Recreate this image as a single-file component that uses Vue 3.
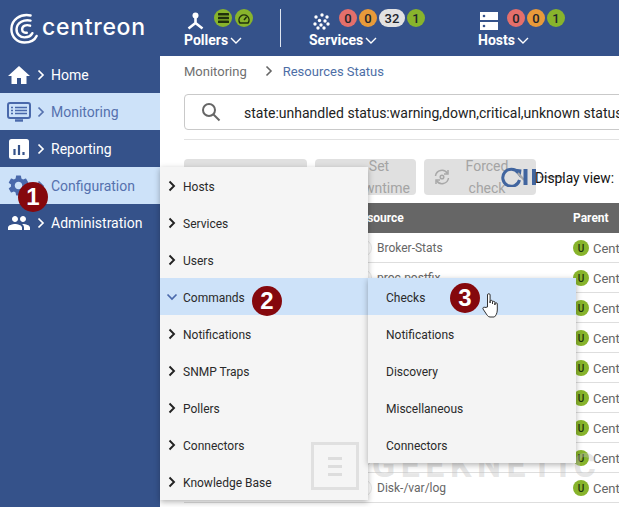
<script setup>
const navItems = [
  { label: 'Home', icon: 'home' },
  { label: 'Monitoring', icon: 'monitor', active: true },
  { label: 'Reporting', icon: 'report' },
  { label: 'Configuration', icon: 'gear', active: true, open: true },
  { label: 'Administration', icon: 'users' }
]
const menuOne = ['Hosts', 'Services', 'Users', 'Commands', 'Notifications', 'SNMP Traps', 'Pollers', 'Connectors', 'Knowledge Base']
const menuTwo = ['Checks', 'Notifications', 'Discovery', 'Miscellaneous', 'Connectors']
const rows = ['Broker-Stats', 'proc-postfix', 'Ping', 'Memory', 'Load', 'Cpu', 'Swap', 'Disk-/', 'Disk-/var/log']
const serviceDots = [[3, 4], [9, 2], [14, 4], [6.500, 7.500], [12, 8], [2, 11], [8, 12], [15, 11], [5, 15], [11, 15]]
</script>

<template>
  <div class="screen">
    <header class="topbar">
      <div class="brand">
        <svg class="brand-mark" viewBox="0 0 30 32" fill="none" stroke="#fff" stroke-width="2.600" stroke-linecap="round">
          <path d="M22 2C11 0 1.500 6.500 1.500 16.500 1.500 25.500 8 31 15.500 31c6 0 11-2.500 13-7" />
          <path d="M22 7.500C15 6 7.500 9.500 7 16.500 6.700 22 11 25.500 15.500 25.500c3.500 0 7-1.500 8.500-4.500" />
          <path d="M21.500 13c-4-1.500-8.500 0-8.500 4 0 3 3 4 5 3.500" />
        </svg>
        <span class="brand-name">centreon</span>
      </div>

      <div class="stat pollers">
        <div class="stat-top">
          <svg class="stat-icon" width="19" height="19" viewBox="0 0 19 19" fill="#fff">
            <circle cx="9.500" cy="3.500" r="3" />
            <path d="M9.500 5v6M9.500 11l-7 5.500M9.500 11l7 5.500" stroke="#fff" stroke-width="2.600" fill="none" />
          </svg>
          <div class="badges">
            <span class="badge green">
              <svg width="11" height="10" viewBox="0 0 11 10" fill="#20300c">
                <rect y="0" width="11" height="2.600" rx=".6" /><rect y="3.700" width="11" height="2.600" rx=".6" /><rect y="7.400" width="11" height="2.600" rx=".6" />
              </svg>
            </span>
            <span class="badge green">
              <svg width="12" height="11" viewBox="0 0 12 11" fill="none" stroke="#20300c" stroke-width="1.500">
                <path d="M2 10a5 5 0 1 1 8 0z" /><path d="M6 7l2.500-3" />
              </svg>
            </span>
          </div>
        </div>
        <div class="stat-label">Pollers<svg class="caret" width="12" height="7" viewBox="0 0 12 7" fill="none" stroke="#fff" stroke-width="1.400"><path d="M1 1l5 5 5-5" /></svg></div>
      </div>

      <div class="divider"></div>

      <div class="stat services">
        <div class="stat-top">
          <svg class="stat-icon" width="17" height="17" viewBox="0 0 17 17" fill="#fff">
            <circle v-for="(d, i) in serviceDots" :key="i" :cx="d[0]" :cy="d[1]" r="1.700" />
          </svg>
          <div class="badges">
            <span class="badge red">0</span>
            <span class="badge orange">0</span>
            <span class="badge grey wide">32</span>
            <span class="badge green">1</span>
          </div>
        </div>
        <div class="stat-label">Services<svg class="caret" width="12" height="7" viewBox="0 0 12 7" fill="none" stroke="#fff" stroke-width="1.400"><path d="M1 1l5 5 5-5" /></svg></div>
      </div>

      <div class="stat hosts">
        <div class="stat-top">
          <svg class="stat-icon" width="18" height="18" viewBox="0 0 18 18">
            <rect width="18" height="8" fill="#fff" /><rect y="10" width="18" height="8" fill="#fff" />
            <circle cx="4" cy="4" r="1.300" fill="#35528a" /><circle cx="4" cy="14" r="1.300" fill="#35528a" />
          </svg>
          <div class="badges">
            <span class="badge red">0</span>
            <span class="badge orange">0</span>
            <span class="badge green">1</span>
          </div>
        </div>
        <div class="stat-label">Hosts<svg class="caret" width="12" height="7" viewBox="0 0 12 7" fill="none" stroke="#fff" stroke-width="1.400"><path d="M1 1l5 5 5-5" /></svg></div>
      </div>
    </header>

    <div class="body">
      <nav class="sidebar">
        <div v-for="item in navItems" :key="item.label" class="nav-item" :class="{ active: item.active }">
          <span class="nav-icon">
            <svg v-if="item.icon === 'home'" width="24" height="24" viewBox="0 0 24 24" fill="#fff"><path d="M10 21v-6h4v6h5.500v-8H23L12 3 1 13h3.500v8z" /></svg>
            <svg v-else-if="item.icon === 'monitor'" width="24" height="20" viewBox="0 0 24 20" fill="none" stroke="#4a69ab" stroke-width="2">
              <rect x="1" y="1" width="22" height="15" rx="2" />
              <path d="M8 18.500h8" stroke-width="2.400" />
              <path d="M4 5.500h2M8 5.500h12M4 8.500h2M8 8.500h12M4 11.500h2M8 11.500h12" stroke-width="1.500" />
            </svg>
            <svg v-else-if="item.icon === 'report'" width="20" height="20" viewBox="0 0 20 20">
              <rect width="20" height="20" rx="2.500" fill="#fff" />
              <path d="M5.500 10v6M10 6v10M14.500 13v3" stroke="#35528a" stroke-width="2.200" />
            </svg>
            <svg v-else-if="item.icon === 'gear'" width="25" height="25" viewBox="0 0 24 24" fill="#4a69ab"><path d="M19.140 12.940c.04-.3.06-.61.06-.94 0-.32-.02-.64-.07-.94l2.030-1.580a.49.49 0 0 0 .12-.61l-1.920-3.320a.488.488 0 0 0-.59-.22l-2.390.96c-.5-.38-1.030-.7-1.620-.94l-.36-2.540a.484.484 0 0 0-.48-.41h-3.840c-.24 0-.43.17-.47.41l-.36 2.540c-.59.24-1.130.57-1.620.94l-2.390-.96c-.22-.08-.47 0-.59.22L2.740 8.870c-.12.21-.08.47.12.61l2.030 1.580c-.05.3-.09.63-.09.94s.02.64.07.94l-2.030 1.580a.49.49 0 0 0-.12.61l1.920 3.320c.12.22.37.29.59.22l2.390-.96c.5.38 1.030.7 1.620.94l.36 2.540c.05.24.24.41.48.41h3.840c.24 0 .44-.17.47-.41l.36-2.540c.59-.24 1.130-.56 1.620-.94l2.390.96c.22.08.47 0 .59-.22l1.920-3.320c.12-.22.07-.47-.12-.61l-2.010-1.580zM12 15.600c-1.980 0-3.600-1.620-3.600-3.600s1.620-3.600 3.600-3.600 3.600 1.620 3.600 3.600-1.620 3.600-3.600 3.600z" /></svg>
            <svg v-else width="24" height="24" viewBox="0 0 24 24" fill="#fff"><path d="M16 11c1.660 0 2.990-1.340 2.990-3S17.660 5 16 5c-1.660 0-3 1.340-3 3s1.340 3 3 3zm-8 0c1.660 0 2.990-1.340 2.990-3S9.660 5 8 5C6.340 5 5 6.340 5 8s1.340 3 3 3zm0 2c-2.330 0-7 1.170-7 3.500V19h14v-2.500c0-2.330-4.670-3.500-7-3.500zm8 0c-.29 0-.62.02-.97.05 1.160.84 1.970 1.970 1.970 3.450V19h6v-2.500c0-2.330-4.670-3.500-7-3.500z" /></svg>
          </span>
          <svg class="nav-chev" width="8" height="12" viewBox="0 0 8 12" fill="none" stroke="currentColor" stroke-width="1.700"><path d="M1.500 1.500L6 6l-4.500 4.500" /></svg>
          <span class="nav-label">{{ item.label }}</span>
        </div>
      </nav>

      <main class="content">
        <div class="crumbs">
          <span class="crumb">Monitoring</span>
          <svg class="crumb-sep" width="8" height="12" viewBox="0 0 8 12" fill="none" stroke="#666" stroke-width="1.600"><path d="M1.500 1.500L6 6l-4.500 4.500" /></svg>
          <span class="crumb current">Resources Status</span>
        </div>

        <div class="search">
          <svg class="search-icon" width="20" height="20" viewBox="0 0 20 20" fill="none" stroke="#666" stroke-width="2"><circle cx="8" cy="8" r="6" /><path d="M12.500 12.500l6 6" /></svg>
          <span class="search-text">state:unhandled status:warning,down,critical,unknown status_types:hard</span>
        </div>
        <div class="rule"></div>

        <div class="toolbar">
          <div class="tool tool-a"></div>
          <div class="tool tool-b"><span>Set</span><span>downtime</span></div>
          <div class="tool tool-c">
            <svg width="18" height="18" viewBox="0 0 18 18" fill="none" stroke="#a8a8a8" stroke-width="1.500">
              <path d="M2.500 8a6.500 6.500 0 0 1 12-2.500M15.500 10a6.500 6.500 0 0 1-12 2.500" />
              <path d="M15 2v4h-4M3 16v-4h4" />
              <circle cx="9" cy="9" r="1.800" />
            </svg>
            <span class="tool-words"><span>Forced</span><span>check</span></span>
          </div>
          <svg class="refresh" width="36" height="20" viewBox="0 0 36 20" fill="none">
            <path d="M17 5.500A8.500 8.500 0 1 0 18.500 13" stroke="#41659f" stroke-width="3" />
            <path d="M12 1.500l8.500 1-1 8.500z" fill="#41659f" />
            <path d="M17 6l6 7" stroke="#a8a8a8" stroke-width="2" />
            <rect x="22.500" y="2" width="4" height="16" fill="#41659f" />
            <rect x="31" y="2" width="4" height="16" fill="#41659f" />
          </svg>
          <svg class="ghost" width="24" height="6" viewBox="0 0 24 6"><path d="M0 3h24" stroke="#a8a8a8" stroke-width="1.500" /></svg>
          <span class="display">Display view:</span>
        </div>

        <div class="table">
          <div class="thead">
            <span class="th-status"></span>
            <span class="th-resource">Resource</span>
            <span class="th-parent">Parent</span>
          </div>
          <div v-for="row in rows" :key="row" class="trow">
            <span class="td-status"></span>
            <span class="td-resource"><i class="ring"></i>{{ row }}</span>
            <span class="td-parent"><b class="u">U</b>Centreon</span>
          </div>
        </div>
      </main>
    </div>

    <div class="mark-text">GEEKNETIC</div>

    <ul class="menu menu-one">
      <li v-for="m in menuOne" :key="m" class="menu-item" :class="{ hot: m === 'Commands' }">
        <svg v-if="m === 'Commands'" class="menu-chev" width="12" height="8" viewBox="0 0 12 8" fill="none" stroke="#4a69ab" stroke-width="1.700"><path d="M1.500 1.500L6 6l4.500-4.500" /></svg>
        <svg v-else class="menu-chev" width="12" height="12" viewBox="0 0 12 12" fill="none" stroke="#222" stroke-width="1.900"><path d="M3.500 1.500L8 6l-4.500 4.500" /></svg>
        <span>{{ m }}</span>
      </li>
    </ul>
    <ul class="menu menu-two">
      <li v-for="m in menuTwo" :key="m" class="menu-item" :class="{ hot: m === 'Checks' }"><span>{{ m }}</span></li>
    </ul>

    <div class="mark-box"><i></i><i></i><i></i></div>

    <span class="step step-1">1</span>
    <span class="step step-2">2</span>
    <span class="step step-3">3</span>

    <svg class="hand" width="18" height="26" viewBox="0 0 18 26" fill="#fff" stroke="#333" stroke-width="1">
      <path d="M5.500 15V3a1.300 1.300 0 0 1 2.600 0v8V9.500a1.200 1.200 0 0 1 2.400 0V12v-1.500a1.200 1.200 0 0 1 2.400 0V13v-1a1.200 1.200 0 0 1 2.400 0v6c0 3-1.500 6-3 7H8c-2 0-3-2-5-5l-2-3c-.7-1.200 1-2.500 2-1.500z" />
    </svg>
  </div>
</template>

<style>
html, body { margin: 0; overflow: hidden; background: #fff; }
</style>

<style scoped>
.screen {
  position: relative;
  width: 619px;
  height: 507px;
  overflow: hidden;
  background: #fff;
  font-family: Roboto, "Liberation Sans", sans-serif;
}
.topbar {
  display: flex;
  height: 56px;
  background: #35528a;
  color: #fff;
}
.brand {
  width: 184px;
  display: flex;
  align-items: center;
  padding-left: 10px;
  box-sizing: border-box;
  gap: 4px;
}
.brand-mark { width: 28px; height: 31px; flex: none; }
.brand-name {
  font-family: Inter, Lato, sans-serif;
  font-size: 23px;
  letter-spacing: .7px;
  margin-top: -3px;
  font-weight: 500;
}
.stat { display: flex; flex-direction: column; padding-top: 9px; }
.stat-top { display: flex; height: 23px; }
.badges { display: flex; gap: 2px; }
.stat-label {
  font-size: 14px;
  font-weight: 700;
  line-height: 16px;
  display: flex;
  align-items: center;
  gap: 2px;
}
.caret { margin-top: 1px; }
.pollers { width: 96px; }
.pollers .stat-icon { margin: 3px 0 0 2px; }
.pollers .badges { margin-left: 9px; gap: 3px; }
.divider { width: 1px; height: 38px; margin-top: 9px; background: #dfe5f0; }
.services { margin-left: 28px; width: 169px; }
.services .stat-icon { margin: 4px 0 0 4px; }
.services .badges { margin-left: 9px; }
.hosts .stat-icon { margin: 3px 0 0 2px; }
.hosts .badges { margin-left: 9px; }
.badge {
  width: 18px;
  height: 18px;
  border-radius: 9px;
  display: flex;
  align-items: center;
  justify-content: center;
  font-size: 13px;
  font-weight: 500;
  color: #20242c;
}
.badge.wide { width: 26px; }
.red { background: #e46f6b; }
.orange { background: #e89a3a; }
.grey { background: #e2e2e2; }
.green { background: #88b42c; }

.body { display: flex; height: 451px; }
.sidebar { width: 160px; flex: none; background: #35528a; }
.nav-item {
  display: flex;
  align-items: center;
  height: 37px;
  color: #fff;
  font-size: 14px;
}
.nav-item.active { background: #cde2f9; color: #5571ae; }
.nav-icon { width: 37px; display: flex; justify-content: center; align-items: center; flex: none; }
.nav-chev { margin: 0 6px 0 0; flex: none; }
.nav-label { white-space: nowrap; padding-top: 1px; }

.content { flex: 1; min-width: 0; padding-left: 24px; overflow: hidden; }
.crumbs {
  display: flex;
  align-items: center;
  height: 30px;
  font-size: 13px;
  white-space: nowrap;
}
.crumb { color: #6f6f6f; }
.crumb.current { color: #4d6ea6; }
.crumb-sep { margin: 0 10px 0 18px; }
.search {
  display: flex;
  align-items: center;
  width: 500px;
  height: 36px;
  margin-top: 8px;
  border: 1px solid #c9c9c9;
  border-radius: 4px;
  box-sizing: border-box;
  white-space: nowrap;
}
.search-icon { margin-left: 16px; flex: none; }
.search-text { margin-left: 23px; padding-top: 2px; font-size: 14px; color: #222; }
.rule { height: 1px; background: #e2e2e2; margin-top: 9px; width: 500px; }
.toolbar {
  display: flex;
  align-items: center;
  width: 500px;
  height: 36px;
  margin-top: 19px;
  gap: 8px;
}
.tool {
  height: 36px;
  background: #e0e0e0;
  border-radius: 4px;
  flex: none;
  color: #a4a4a4;
  font-size: 14px;
  line-height: 22px;
  box-sizing: border-box;
}
.tool-a { width: 123px; }
.tool-b {
  width: 101px;
  display: flex;
  flex-direction: column;
  align-items: center;
  justify-content: center;
  padding-left: 27px;
}
.tool-c {
  width: 112px;
  display: flex;
  align-items: center;
  padding-left: 9px;
}
.tool-words {
  display: flex;
  flex-direction: column;
  align-items: center;
  width: 56px;
  margin-left: 8px;
}
.refresh { margin-left: -43px; flex: none; }
.ghost { margin-left: -5px; margin-right: -37px; flex: none; }
.display { font-size: 13.800px; color: #111; white-space: nowrap; padding-top: 2px; }

.table { width: 500px; margin-top: 8px; font-size: 12px; }
.thead, .trow { display: grid; grid-template-columns: 163px 226px 1fr; align-items: center; }
.thead { height: 30px; background: #666; color: #fff; font-weight: 700; }
.th-resource { padding-left: 6px; }
.trow { height: 30px; border-bottom: 1px solid #dedede; box-sizing: border-box; color: #666; padding-top: 1px; }
.td-resource { display: flex; align-items: center; white-space: nowrap; }
.ring {
  width: 18px;
  height: 18px;
  border-radius: 50%;
  border: 1px solid #e8e8e8;
  box-sizing: border-box;
  margin: 0 5px 0 7px;
}
.td-parent { display: flex; align-items: center; white-space: nowrap; gap: 4px; font-size: 13px; }
.u {
  width: 16px;
  height: 16px;
  border-radius: 50%;
  background: #88b42c;
  color: #20300c;
  font-size: 10px;
  font-weight: 500;
  display: flex;
  align-items: center;
  justify-content: center;
}

.menu {
  position: absolute;
  margin: 0;
  padding: 0;
  list-style: none;
  width: 208px;
  background: #f5f5f5;
  box-shadow: 0 2px 6px rgba(0, 0, 0, .3);
}
.menu-one { left: 160px; top: 167px; z-index: 4; }
.menu-two { left: 368px; top: 278px; z-index: 6; background: #f4f4f4; }
.menu-item {
  display: flex;
  align-items: center;
  height: 37px;
  font-size: 12px;
  color: #2a2a2a;
}
.menu-item span { padding-top: 2px; }
.menu-item.hot { background: #cde2f9; }
.menu-chev { margin-left: 6px; width: 12px; flex: none; }
.menu-one .menu-item span { margin-left: 5px; }
.menu-two .menu-item span { margin-left: 18px; }

.mark-box {
  position: absolute;
  left: 311px;
  top: 442px;
  width: 48px;
  height: 48px;
  box-sizing: border-box;
  border: 3px solid rgba(200, 200, 200, .45);
  display: flex;
  flex-direction: column;
  align-items: center;
  justify-content: center;
  gap: 5px;
  z-index: 5;
}
.mark-box i { display: block; width: 14px; height: 3px; background: rgba(200, 200, 200, .55); }
.mark-text {
  position: absolute;
  left: 372px;
  top: 445px;
  font-size: 34px;
  line-height: 40px;
  font-weight: 700;
  letter-spacing: 5.500px;
  color: rgba(190, 190, 190, .4);
  white-space: nowrap;
  z-index: 5;
}
.step {
  position: absolute;
  width: 30px;
  height: 30px;
  border-radius: 50%;
  background: #85080d;
  color: #fff;
  font-family: "Liberation Sans", sans-serif;
  font-weight: 700;
  font-size: 24px;
  display: flex;
  align-items: center;
  justify-content: center;
  z-index: 8;
}
.step-1 { left: 18px; top: 182px; }
.step-2 { left: 252px; top: 286px; }
.step-3 { left: 450px; top: 283px; }
.hand { position: absolute; left: 482px; top: 292px; z-index: 9; }
</style>
